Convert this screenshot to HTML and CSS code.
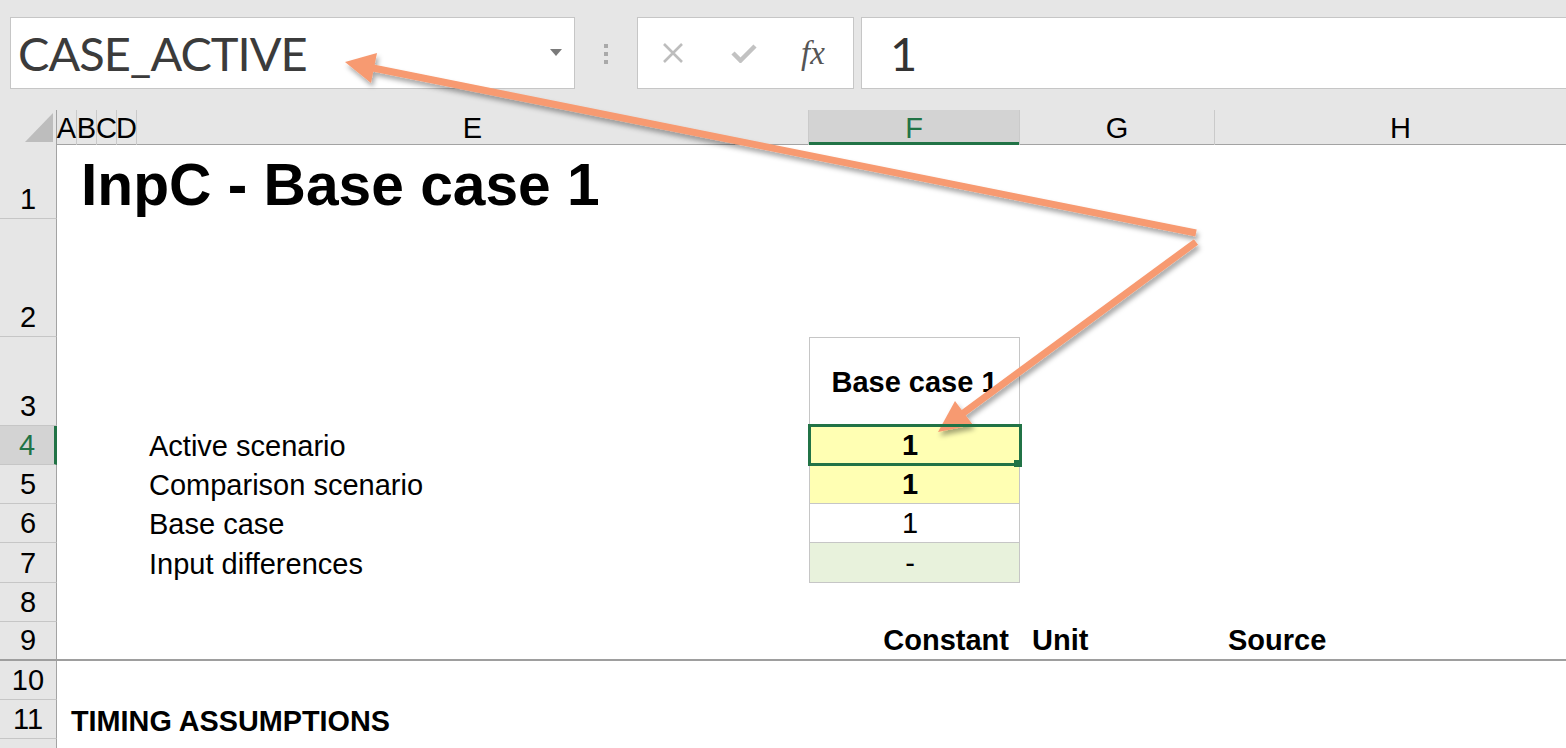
FILE: index.html
```html
<!DOCTYPE html>
<html lang="en">
<head>
  <meta charset="UTF-8">
  <meta name="viewport" content="width=device-width, initial-scale=1.0">
  <title>InpC - Base case 1</title>
  <link rel="stylesheet" href="styles.css">
</head>
<body>
  <div class="formula-bar">
    <div class="name-box">
      <span>CASE_ACTIVE</span>
      <svg class="caret" width="12" height="7" viewBox="0 0 12 7"><path d="M0 0h12L6 7z"/></svg>
    </div>
    <div class="grip"><i></i><i></i><i></i></div>
    <div class="fx-buttons">
      <svg class="btn-cancel" width="22" height="22" viewBox="0 0 22 22"><path d="M2 2L20 20M20 2L2 20"/></svg>
      <svg class="btn-enter" width="26" height="20" viewBox="0 0 26 20"><path d="M2 10l7.5 7.5L24 3"/></svg>
      <span class="fx">fx</span>
    </div>
    <div class="formula-input">1</div>
  </div>

  <div class="sheet">
    <div class="row head">
      <div class="rh corner"><svg width="56" height="34" viewBox="0 0 56 34"><path d="M25 32L53 3V32z"/></svg></div>
      <div class="ch">A</div>
      <div class="ch">B</div>
      <div class="ch">C</div>
      <div class="ch">D</div>
      <div class="ch">E</div>
      <div class="ch sel">F</div>
      <div class="ch">G</div>
      <div class="ch">H</div>
    </div>
    <div class="row r1">
      <div class="rh">1</div>
      <div class="cell col-a title">InpC - Base case 1</div>
    </div>
    <div class="row r2">
      <div class="rh">2</div>
    </div>
    <div class="row r3">
      <div class="rh">3</div>
      <div class="cell col-f case-head">Base case 1</div>
    </div>
    <div class="row">
      <div class="rh sel">4</div>
      <div class="cell col-e">Active scenario</div>
      <div class="cell col-f val input active">1</div>
    </div>
    <div class="row">
      <div class="rh">5</div>
      <div class="cell col-e">Comparison scenario</div>
      <div class="cell col-f val input">1</div>
    </div>
    <div class="row">
      <div class="rh">6</div>
      <div class="cell col-e">Base case</div>
      <div class="cell col-f val">1</div>
    </div>
    <div class="row r7">
      <div class="rh">7</div>
      <div class="cell col-e">Input differences</div>
      <div class="cell col-f val diff">-</div>
    </div>
    <div class="row">
      <div class="rh">8</div>
    </div>
    <div class="row sep">
      <div class="rh">9</div>
      <div class="cell col-f bold right">Constant</div>
      <div class="cell col-g bold">Unit</div>
      <div class="cell col-h bold">Source</div>
    </div>
    <div class="row">
      <div class="rh">10</div>
    </div>
    <div class="row">
      <div class="rh">11</div>
      <div class="cell col-a section">TIMING ASSUMPTIONS</div>
    </div>
    <div class="row">
      <div class="rh"></div>
    </div>
  </div>

  <svg class="callout" width="1566" height="748" viewBox="0 0 1566 748">
    <defs>
      <filter id="shade" filterUnits="userSpaceOnUse" x="0" y="0" width="1566" height="748">
        <feDropShadow dx="2" dy="4" stdDeviation="2.5" flood-color="#000" flood-opacity=".35"/>
      </filter>
    </defs>
    <g filter="url(#shade)">
      <path class="shaft" d="M1196 233L373 68"/>
      <path class="head" d="M345 62L377 53L371 83z"/>
      <path class="shaft" d="M1196 242L962 414"/>
      <path class="head" d="M938 432L973 425L955 401z"/>
    </g>
  </svg>
</body>
</html>
```

FILE: styles.css
```css
body{
  margin: 0;
  width: 1566px;
  height: 748px;
  overflow: hidden;
  position: relative;
  background: #fff;
  font-family: "Liberation Sans", Arial, sans-serif;
  color: #000;
}

/* formula bar */
.formula-bar{
  height: 110px;
  box-sizing: border-box;
  padding: 17px 0 0 10px;
  background: #e6e6e6;
  display: flex;
  align-items: flex-start;
}
.name-box{
  width: 565px;
  height: 72px;
  box-sizing: border-box;
  border: 1px solid #c6c6c6;
  background: #fff;
  padding: 0 12px 0 7px;
  display: flex;
  align-items: center;
  justify-content: space-between;
  font: 47px Lato, "Open Sans", sans-serif;
  letter-spacing: -1px;
  color: #3b3b3b;
}
.name-box .caret{
  fill: #7a7a7a;
  margin-top: -2px;
}
.grip{
  width: 62px;
  padding-top: 27px;
  display: flex;
  flex-direction: column;
  align-items: center;
  gap: 4px;
}
.grip i{
  width: 4px;
  height: 4px;
  background: #a9a9a9;
}
.fx-buttons{
  width: 217px;
  height: 72px;
  box-sizing: border-box;
  border: 1px solid #c6c6c6;
  background: #fff;
  display: flex;
  align-items: center;
}
.btn-cancel{
  margin-left: 24px;
  stroke: #bdbdbd;
  stroke-width: 2.6;
  fill: none;
}
.btn-enter{
  margin-left: 47px;
  stroke: #c2c2c2;
  stroke-width: 4.5;
  fill: none;
}
.fx{
  margin-left: 44px;
  font: italic 33px "Liberation Serif", serif;
  color: #555;
}
.formula-input{
  flex: 1;
  height: 72px;
  margin-left: 7px;
  box-sizing: border-box;
  border: 1px solid #c6c6c6;
  border-right: none;
  background: #fff;
  padding-left: 28px;
  display: flex;
  align-items: center;
  font: 47px Lato, "Open Sans", sans-serif;
  color: #333;
}

/* sheet grid */
.row{
  display: grid;
  grid-template-columns: 57px 20px 20px 20px 20px 672px 211px 195px 372px;
  height: 39px;
  box-sizing: border-box;
}
.row.r1{ height: 74px; }
.row.r2{ height: 118px; }
.row.r3{ height: 89px; }
.row.r7{ height: 40px; }
.row.sep{ border-bottom: 2px solid #9e9e9e; }

.rh{
  grid-column: 1;
  grid-row: 1;
  background: #e6e6e6;
  border-right: 1px solid #a3a3a3;
  border-bottom: 1px solid #c6c6c6;
  box-sizing: border-box;
  display: flex;
  align-items: flex-end;
  justify-content: center;
  padding-bottom: 2px;
  font-size: 29px;
}
.sep .rh{ border-bottom: none; }
.rh.sel{
  background: #d3d3d3;
  color: #217346;
  border-right: 3px solid #217346;
}

.row.head{
  height: 35px;
  background: #e6e6e6;
  border-bottom: 1px solid #a3a3a3;
}
.head .rh{
  border-bottom: none;
  padding: 0;
  display: block;
}
.head .rh svg{
  display: block;
  fill: #bdbdbd;
}
.ch{
  grid-row: 1;
  border-right: 1px solid #cacaca;
  display: flex;
  align-items: center;
  justify-content: center;
  padding-top: 2px;
  font-size: 29px;
  white-space: nowrap;
  overflow: visible;
  min-width: 0;
}
.ch.sel{
  background: #d3d3d3;
  color: #217346;
  box-shadow: inset 0 -3px 0 #217346;
}

.cell{
  grid-row: 1;
  display: flex;
  align-items: flex-end;
  padding-bottom: 2px;
  box-sizing: border-box;
  white-space: nowrap;
  min-width: 0;
  font-size: 29px;
}
.col-a{ grid-column: 2 / 6; }
.col-e{ grid-column: 6; padding-left: 12px; }
.col-f{ grid-column: 7; }
.col-g{ grid-column: 8; padding-left: 12px; }
.col-h{ grid-column: 9; padding-left: 13px; }

.title{
  padding-left: 24px;
  padding-bottom: 1px;
  font-size: 58.7px;
  font-weight: bold;
}
.section{
  padding-left: 14px;
  padding-bottom: 1px;
  font-size: 28.8px;
  font-weight: bold;
}
.bold{ font-weight: bold; }
.right{
  justify-content: flex-end;
  padding-right: 11px;
}

.case-head{
  border: 1px solid #c6c6c6;
  border-bottom: none;
  align-items: center;
  justify-content: center;
  padding: 0;
  font-weight: bold;
}
.val{
  justify-content: center;
  padding-right: 9px;
  border: 1px solid #c6c6c6;
  border-top: none;
}
.val.input{
  background: #ffffb3;
  font-weight: bold;
}
.val.diff{ background: #e8f2dc; }
.val.active{ position: relative; }
.val.active::after{
  content: '';
  position: absolute;
  top: -2px;
  left: -2px;
  right: -3px;
  bottom: -2px;
  border: 3px solid #217346;
  z-index: 1;
}
.val.active::before{
  content: '';
  position: absolute;
  right: -3px;
  bottom: -3px;
  width: 8px;
  height: 7px;
  background: #217346;
  z-index: 2;
}

/* callout arrows */
.callout{
  position: absolute;
  top: 0;
  left: 0;
  pointer-events: none;
}
.callout .shaft{
  stroke: #f79a71;
  stroke-width: 7;
  fill: none;
}
.callout .head{
  fill: #f79a71;
}
```
